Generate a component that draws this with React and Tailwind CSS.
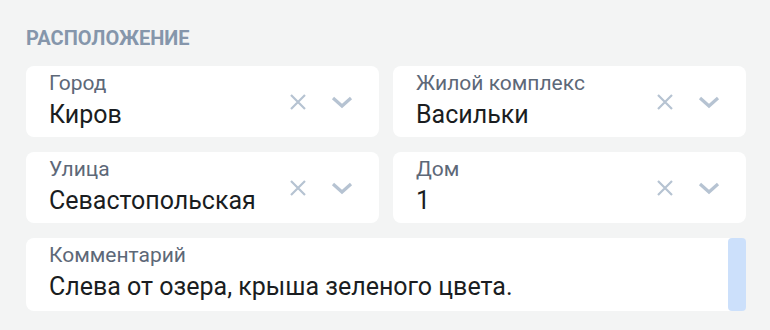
import React from "react";

const ClearIcon = () => (
  <svg width="18" height="18" viewBox="0 0 18 18" fill="none" stroke="#b6c3d2" strokeWidth="2.2">
    <path d="M2 2 L16 16 M16 2 L2 16" />
  </svg>
);

const ChevronIcon = () => (
  <svg width="22" height="14" viewBox="0 0 22 14" fill="none" stroke="#b6c3d2" strokeWidth="3.2">
    <path d="M2 3 L11 11 L20 3" />
  </svg>
);

const SelectField = ({ label, value }) => (
  <div className="flex h-[71px] items-start rounded-lg bg-white pl-[23px] pr-[26px] pt-[5px]">
    <div className="flex flex-1 flex-col">
      <span className="text-[21px] leading-[24px] text-[#5d6878]">{label}</span>
      <span className="mt-[6px] text-[25px] leading-[28px] text-[#1a1d21]">{value}</span>
    </div>
    <div className="flex items-center gap-[24px] pt-[22px]">
      <ClearIcon />
      <ChevronIcon />
    </div>
  </div>
);

const App = () => {
  return (
    <div
      className="h-[330px] w-[770px] bg-[#f3f4f4] pl-[26px] pr-[24px] pt-[27px]"
      style={{ fontFamily: "Roboto, 'Noto Sans', sans-serif" }}
    >
      <div className="text-[20px] font-bold uppercase leading-[22px] text-[#8596ab]">Расположение</div>
      <div className="mt-[17px] grid grid-cols-2 gap-x-[14px] gap-y-[15px]">
        <SelectField label="Город" value="Киров" />
        <SelectField label="Жилой комплекс" value="Васильки" />
        <SelectField label="Улица" value="Севастопольская" />
        <SelectField label="Дом" value="1" />
      </div>
      <div className="mt-[15px] flex h-[73px] rounded-lg bg-white">
        <div className="flex flex-1 flex-col pl-[23px] pt-[5px]">
          <span className="text-[21px] leading-[24px] text-[#5d6878]">Комментарий</span>
          <span className="mt-[6px] text-[25px] leading-[28px] text-[#1a1d21]">Слева от озера, крыша зеленого цвета.</span>
        </div>
        <div className="w-[18px] rounded-[4px] bg-[#cce0fb]" />
      </div>
    </div>
  );
};

export default App;
